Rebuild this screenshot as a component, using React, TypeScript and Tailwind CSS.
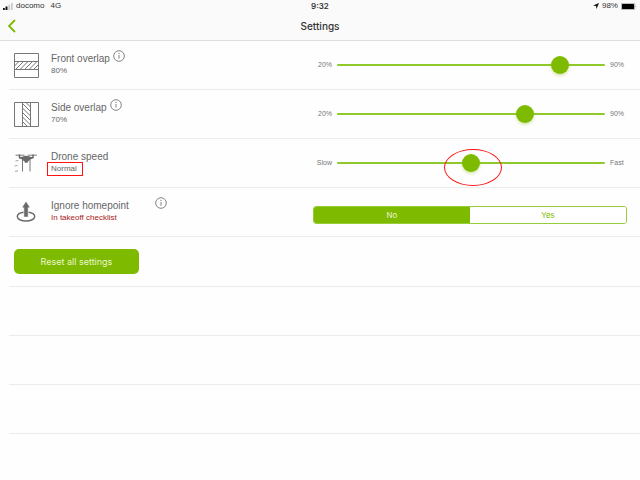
import { useState, type ReactNode } from 'react'

const SLIDER_CLASS =
  'block h-[18px] w-full min-w-0 cursor-pointer appearance-none bg-transparent ' +
  '[&::-webkit-slider-runnable-track]:h-[2px] [&::-webkit-slider-runnable-track]:rounded-full [&::-webkit-slider-runnable-track]:bg-[#8fc92c] ' +
  '[&::-webkit-slider-thumb]:-mt-2 [&::-webkit-slider-thumb]:size-[18px] [&::-webkit-slider-thumb]:appearance-none [&::-webkit-slider-thumb]:rounded-full ' +
  '[&::-webkit-slider-thumb]:bg-[#7ebb00] [&::-webkit-slider-thumb]:shadow-[0_2px_3px_rgba(126,187,0,0.3)]'

const FrontOverlapIcon = () => (
  <svg width="25" height="25" viewBox="0 0 25 25" fill="none" stroke="#777" aria-hidden="true">
    <path d="M.5 .5h24v24H.5zM.5 8.5h24M.5 16.5h24" />
    <path d="M.5 13l4.500-4.500M1.500 16.500l8-8M6 16.500l8-8M10.500 16.500l8-8M15 16.500l8-8M19.500 16.500l5-5" />
  </svg>
)

const SideOverlapIcon = () => (
  <svg width="25" height="25" viewBox="0 0 25 25" fill="none" stroke="#777" aria-hidden="true">
    <path d="M.5 .5h24v24H.5zM8.500 .5v24M16.500 .5v24" />
    <path d="M12 .5l4.500 4.500M8.500 1.500l8 8M8.500 6l8 8M8.500 10.500l8 8M8.500 15l8 8M8.500 19.500l5 5" />
  </svg>
)

const DroneIcon = () => (
  <svg width="25" height="25" viewBox="0 0 25 25" fill="none" stroke="#6a6a6a" aria-hidden="true">
    <path d="M1.500 4.200h9M13.800 4.200h9" strokeWidth=".9" />
    <path d="M5.500 3.500v3M19 3.500v3" strokeWidth="1.400" />
    <path d="M4.800 5.500c2 .9 3.200 .6 4.700-.2 1.800-.7 3.700-.7 5.500 0 1.500 .8 2.700 1.100 4.700 .2v1.700L16 8.600c-.8 1.300-1.600 1.800-2.300 2.100v1.100h-2.900v-1.100c-.8-.3-1.500-.8-2.300-2.100L4.800 7.200z" fill="#6a6a6a" stroke="none" />
    <path d="M8.500 8v12.500M16 8v12.500" strokeWidth=".9" />
    <path d="M1.500 10l3-.5M.5 15l3-.5M1 20.300l3-.5" stroke="#999" strokeWidth=".9" />
  </svg>
)

const HomepointIcon = () => (
  <svg width="25" height="25" viewBox="0 0 25 25" fill="none" stroke="#6a6a6a" aria-hidden="true">
    <path d="M9.500 12.300C5.800 12.800 3.300 14.300 3.300 16.500c0 2.600 4 4.600 8.700 4.600s8.700-2 8.700-4.600c0-2.200-2.500-3.700-6.200-4.200" strokeWidth="1.500" />
    <path d="M12 2l3.300 5.200h-1.600V16.500h-3.400V7.200H8.700z" fill="#6a6a6a" strokeWidth=".5" />
  </svg>
)

const InfoButton = ({ topic }: { topic: string }) => (
  <button type="button" aria-label={`About ${topic}`} className="-mt-[3px] size-3 shrink-0">
    <svg width="12" height="12" viewBox="0 0 12 12" fill="none" stroke="#777" aria-hidden="true">
      <circle cx="6" cy="6" r="5.300" strokeWidth=".9" />
      <path d="M6 5v3.700" strokeWidth=".9" />
      <circle cx="6" cy="3.400" r=".6" fill="#777" stroke="none" />
    </svg>
  </button>
)

type RowProps = {
  icon: ReactNode
  title: string
  detail: ReactNode
  info?: boolean
  wideInfo?: boolean
  children: ReactNode
}

const SettingRow = ({ icon, title, detail, info, wideInfo, children }: RowProps) => (
  <li className="ml-[9px] grid h-[49px] grid-cols-[299fr_314fr] items-center border-b border-[#ebebeb] pr-[13px] pl-[5px]">
    <div className="flex items-center">
      {icon}
      <div className="ml-3">
        <div className={wideInfo ? 'flex h-3 gap-[26px]' : 'flex h-3 gap-[3px]'}>
          <h2 className="text-[10px] leading-3 whitespace-nowrap text-[#666]">{title}</h2>
          {info && <InfoButton topic={title} />}
        </div>
        <div className="flex text-[8px] leading-3 text-[#666]">{detail}</div>
      </div>
    </div>
    {children}
  </li>
)

type RangeProps = {
  label: string
  min: number
  max: number
  initial: number
  low: string
  high: string
  highlighted?: boolean
}

const RangeControl = ({ label, min, max, initial, low, high, highlighted }: RangeProps) => {
  const [value, setValue] = useState(initial)

  return (
    <div className="grid grid-cols-[24px_1fr_22px] items-center text-[7px] leading-3 text-[#777]">
      <span className="pr-[5px] text-right">{low}</span>
      <div className="relative">
        <input
          type="range"
          aria-label={label}
          min={min}
          max={max}
          value={value}
          onChange={(e) => setValue(Number(e.target.value))}
          className={SLIDER_CLASS}
        />
        {highlighted && (
          <span className="pointer-events-none absolute top-1/2 left-1/2 -mt-[14px] -ml-[27px] h-[37px] w-[58px] rounded-[50%] border border-[#ff1414]" />
        )}
      </div>
      <span className="pl-[5px]">{high}</span>
    </div>
  )
}

const IgnoreHomepointToggle = () => {
  const [ignored, setIgnored] = useState(false)
  const on = 'bg-[#7ebb00] text-[#eaf5cf]'
  const off = 'bg-white text-[#7ebb00]'

  return (
    <div role="group" aria-label="Ignore homepoint" className="mt-[5px] grid h-[18px] grid-cols-2 overflow-hidden rounded-[3px] border border-[#97cc3a] font-['Inter',sans-serif] text-[8px]">
      <button type="button" aria-pressed={!ignored} onClick={() => setIgnored(false)} className={ignored ? off : on}>
        No
      </button>
      <button type="button" aria-pressed={ignored} onClick={() => setIgnored(true)} className={ignored ? on : off}>
        Yes
      </button>
    </div>
  )
}

const StatusBar = () => (
  <div className="grid h-3 grid-cols-3 items-center text-[8px] leading-3 text-[#333]">
    <div className="flex items-center gap-[3px] pl-[3px]">
      <svg width="10" height="7" viewBox="0 0 10 7" aria-hidden="true">
        <path d="M0 5h1.800v2H0zM2.500 3.500h2V7h-2z" fill="#111" />
        <path d="M5.300 1.800h1.800V7H5.300zM8 0h1.800v7H8z" fill="#ccc" />
      </svg>
      <span>docomo</span>
      <span className="ml-[3px]">4G</span>
    </div>
    <time className="text-center font-['Inter',sans-serif] font-semibold">9:32</time>
    <div className="flex items-center justify-end gap-[3px] pr-[3px]">
      <svg width="6" height="6" viewBox="0 0 6 6" fill="#111" aria-hidden="true">
        <path d="M6 0 3.500 6 3 3 0 2.500z" />
      </svg>
      <span>98%</span>
      <svg width="16" height="7" viewBox="0 0 16 7" aria-hidden="true">
        <rect x=".3" y=".3" width="13.400" height="6.400" rx="1" fill="none" stroke="#777" strokeWidth=".6" />
        <rect x="1" y="1" width="12" height="5" rx=".5" fill="#000" />
        <path d="M14.500 2.500c1 .3 1 1.700 0 2z" fill="#999" />
      </svg>
    </div>
  </div>
)

export default function App() {
  return (
    <div className="min-h-screen bg-[#fefefe] font-['Liberation_Sans',sans-serif]">
      <header className="border-b border-[#dedede] bg-[#fafafa]">
        <StatusBar />
        <div className="grid h-7 grid-cols-[1fr_auto_1fr] items-center">
          <button type="button" aria-label="Back" className="ml-2 h-[14px] w-2">
            <svg width="8" height="14" viewBox="0 0 8 14" fill="none" stroke="#7ebb00" strokeWidth="1.800" aria-hidden="true">
              <path d="M7 1 1 7l6 6" />
            </svg>
          </button>
          <h1 className="font-['Inter',sans-serif] text-[10px] leading-4 font-medium text-[#333]">Settings</h1>
        </div>
      </header>

      <main>
        <ul>
          <SettingRow icon={<FrontOverlapIcon />} title="Front overlap" detail="80%" info>
            <RangeControl label="Front overlap" min={20} max={90} initial={80} low="20%" high="90%" />
          </SettingRow>
          <SettingRow icon={<SideOverlapIcon />} title="Side overlap" detail="70%" info>
            <RangeControl label="Side overlap" min={20} max={90} initial={70} low="20%" high="90%" />
          </SettingRow>
          <SettingRow
            icon={<DroneIcon />}
            title="Drone speed"
            detail={
              <span className="relative">
                Normal
                <span className="pointer-events-none absolute -top-px -right-1.5 -bottom-px -left-1 border border-[#ff1414]" />
              </span>
            }
          >
            <RangeControl label="Drone speed" min={0} max={100} initial={50} low="Slow" high="Fast" highlighted />
          </SettingRow>
          <SettingRow
            icon={<HomepointIcon />}
            title="Ignore homepoint"
            detail={<span className="text-[#a82020]">In takeoff checklist</span>}
            info
            wideInfo
          >
            <IgnoreHomepointToggle />
          </SettingRow>
          <li className="ml-[9px] flex h-[50px] items-center border-b border-[#ebebeb] pl-[5px]">
            <button type="button" className="h-[25px] w-[125px] rounded-[5px] bg-[#7ebb00] font-['Inter',sans-serif] text-[9px] text-[#eaf5cf]">
              Reset all settings
            </button>
          </li>
        </ul>
        {/* Empty table rows */}
        <div aria-hidden="true" className="ml-[9px]">
          <div className="h-[49px] border-b border-[#ebebeb]" />
          <div className="h-[49px] border-b border-[#ebebeb]" />
          <div className="h-[49px] border-b border-[#ebebeb]" />
        </div>
      </main>
    </div>
  )
}
